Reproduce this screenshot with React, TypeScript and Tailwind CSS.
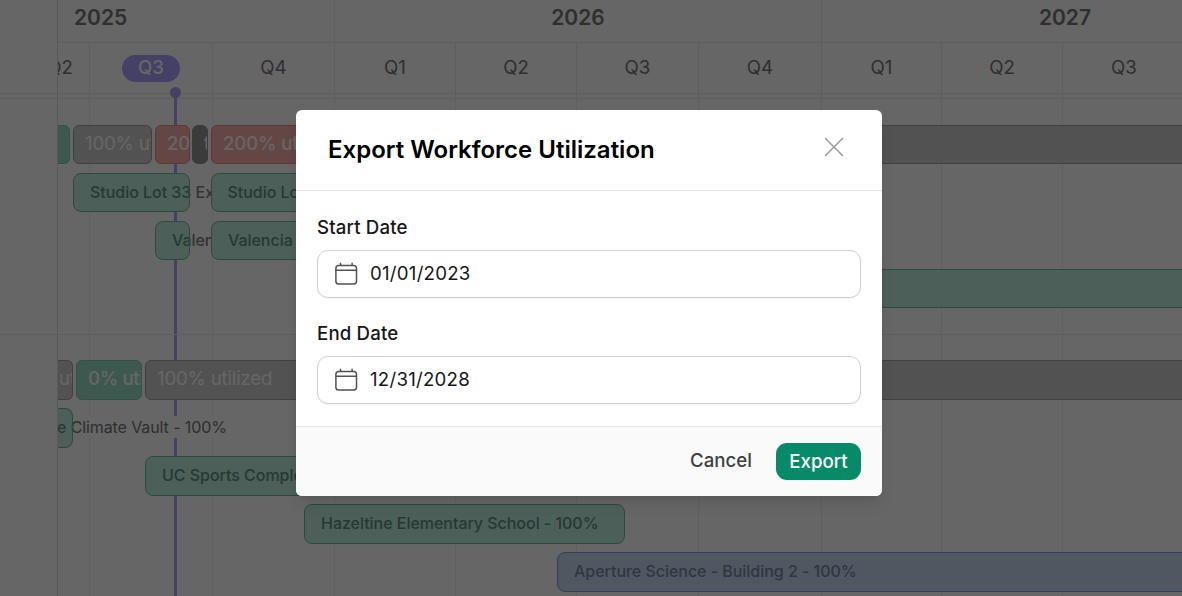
import React from 'react';

interface Quarter {
  label: string;
  width: number;
  current?: boolean;
}

interface BarData {
  // Distance from the end of the previous bar (or from the lane start)
  gap: number;
  width: number;
  tone: string;
  label?: string;
  labelPad?: number;
  openLeft?: boolean;
  labelRoom?: number;
  light?: boolean;
}

interface LaneProps {
  bars: BarData[];
  height: string;
}

const quarters: Quarter[] = [
  { label: 'Q2', width: 32 },
  { label: 'Q3', width: 123, current: true },
  { label: 'Q4', width: 122 },
  { label: 'Q1', width: 121 },
  { label: 'Q2', width: 121 },
  { label: 'Q3', width: 122 },
  { label: 'Q4', width: 123 },
  { label: 'Q1', width: 120 },
  { label: 'Q2', width: 121 },
  { label: 'Q3', width: 123 },
];

const green = 'bg-emerald-500/25 border-[#5fc09e]';
const blue = 'bg-[#6496dc]/35 border-[#7c9ee8]';

const solidGreen = 'bg-[#98dcc4] border-[#7acdb0] font-medium tracking-[-0.02em]';
const solidGray = 'bg-[#cdcdcd] border-[#a0a0a0] font-normal tracking-[-0.01em]';
const solidRed = 'bg-[#fab0ad] border-[#f08a88] font-medium tracking-[-0.01em]';
const solidDark = 'bg-[#959595] border-[#959595] font-medium';

const UtilizationLane: React.FC<LaneProps> = ({ bars, height }) => (
  <div className={`flex ${height}`}>
    {bars.map((bar, i) => (
      <div
        key={i}
        className={`shrink-0 overflow-hidden whitespace-nowrap border text-[18.67px] leading-[36px] text-white ${bar.tone} ${bar.openLeft ? 'rounded-r-md border-l-0' : 'rounded-md'}`}
        style={{ marginLeft: bar.gap, width: bar.width, paddingLeft: bar.labelPad ?? 0 }}
      >
        {bar.label}
      </div>
    ))}
  </div>
);

const AssignmentLane: React.FC<LaneProps> = ({ bars, height }) => (
  <div className={`flex ${height}`}>
    {bars.map((bar, i) => {
      const radius = bar.openLeft ? 'rounded-r-lg' : 'rounded-lg';
      return (
        <div
          key={i}
          className={`relative flex shrink-0 items-center bg-white ${radius}`}
          style={{ marginLeft: bar.gap, width: bar.width }}
        >
          <span
            className={`-mt-0.5 shrink-0 overflow-hidden whitespace-nowrap bg-white text-base leading-[22px] ${bar.light ? 'font-normal tracking-[-0.006em] text-[#757575]' : 'font-medium tracking-[-0.002em] text-[#808080]'}`}
            style={{ marginLeft: bar.labelPad ?? 0, maxWidth: bar.labelRoom }}
          >
            {bar.label}
          </span>
          <div className={`absolute inset-0 border ${radius} ${bar.tone} ${bar.openLeft ? 'border-l-0' : ''}`} />
        </div>
      );
    })}
  </div>
);

const CalendarIcon: React.FC = () => (
  <svg width="24" height="24" viewBox="0 0 24 24" fill="none" stroke="#525252" strokeWidth="1.5" strokeLinecap="round" strokeLinejoin="round">
    <rect x="1.9" y="3.4" width="20.6" height="18.6" rx="2.8" />
    <path d="M1.9 8.2H22.5M6.5 3.2V1.2M18.1 3.2V1.2" />
  </svg>
);

const DateField: React.FC<{ label: string; value: string }> = ({ label, value }) => (
  <div>
    <div className="text-[18.67px] leading-6 font-medium tracking-[0.008em] text-neutral-900">{label}</div>
    <div className="mt-[10px] flex h-12 items-center rounded-[11px] border border-[#d0d0d0] bg-white pl-4 shadow-xs">
      <CalendarIcon />
      <span className="ml-3 text-[18.67px] leading-6 tracking-[0.013em] text-neutral-900">{value}</span>
    </div>
  </div>
);

const Timeline: React.FC = () => (
  <div className="flex h-full bg-white">
    {/* Resource column */}
    <div className="w-[58px] shrink-0 border-r border-[#e0e0e0]">
      <div className="h-[94px] border-b border-[#ececec]" />
      <div className="h-[5px] border-b border-[#ececec]" />
      <div className="h-[236px] border-b border-[#ececec]" />
    </div>

    <div className="relative h-full flex-1 overflow-hidden">
      {/* Years */}
      <div className="flex h-[43px] border-b border-[#ececec] text-[21px] leading-[35px] font-semibold text-[#757575]">
        <div className="w-[277px] shrink-0 border-r border-[#f0f0f0] pl-4">2025</div>
        <div className="w-[487px] shrink-0 border-r border-[#f0f0f0] text-center">2026</div>
        <div className="w-[486px] shrink-0 text-center">2027</div>
      </div>

      {/* Quarters */}
      <div className="flex h-[51px] border-b border-[#ececec] text-[18.67px] text-[#757575]">
        {quarters.map((q, i) => (
          <div
            key={i}
            className={`flex shrink-0 items-center overflow-hidden border-r border-[#ececec] ${i === 0 ? 'justify-end pr-4' : 'justify-center'}`}
            style={{ width: q.width }}
          >
            {q.current ? (
              <span className="h-[27px] w-[58px] rounded-full bg-[#aaa2fc] text-center leading-[25px] font-medium text-white">
                {q.label}
              </span>
            ) : (
              <span>{q.label}</span>
            )}
          </div>
        ))}
      </div>
      <div className="h-[5px] border-b border-[#ececec]" />

      {/* Grid lines and today marker */}
      <div className="absolute inset-x-0 top-[94px] bottom-0 flex">
        {quarters.map((q, i) => (
          <div key={i} className="shrink-0 border-r border-[#f0f0f0]" style={{ width: q.width }} />
        ))}
      </div>
      <div className="absolute top-[92px] bottom-0 left-[116px] w-[3px] bg-[#aaa2fc]" />
      <div className="absolute top-[87px] left-[112px] size-[11px] rounded-full bg-[#aaa2fc]" />

      {/* First person */}
      <div className="relative flex h-[236px] flex-col gap-[9px] border-b border-[#ececec] pt-[26px]">
        <UtilizationLane
          height="h-[39px]"
          bars={[
            { gap: 0, width: 12, tone: solidGreen, openLeft: true },
            { gap: 3, width: 79, tone: solidGray, label: '100% utilized', labelPad: 11 },
            { gap: 3, width: 35, tone: solidRed, label: '200% utilized', labelPad: 11 },
            { gap: 2, width: 16, tone: solidDark, label: 't', labelPad: 11 },
            { gap: 3, width: 462, tone: solidRed, label: '200% utilized', labelPad: 11 },
            { gap: 3, width: 600, tone: solidGray },
          ]}
        />
        <AssignmentLane
          height="h-[39px]"
          bars={[
            { gap: 15, width: 116.5, tone: green, label: 'Studio Lot 33 Expansion - 100%', labelRoom: 121, labelPad: 17 },
            { gap: 21, width: 462, tone: green, label: 'Studio Lot 33 Expansion - 100%', labelPad: 17 },
          ]}
        />
        <AssignmentLane
          height="h-[39px]"
          bars={[
            { gap: 97, width: 34.5, tone: green, label: 'Valencia Studios - 100%', labelRoom: 39, labelPad: 17 },
            { gap: 21, width: 462, tone: green, label: 'Valencia Studios - 100%', labelPad: 17.5 },
          ]}
        />
        <AssignmentLane height="h-[39px]" bars={[{ gap: 617, width: 600, tone: green }]} />
      </div>

      {/* Second person */}
      <div className="relative flex flex-col gap-2 pt-[25px]">
        <UtilizationLane
          height="h-10"
          bars={[
            { gap: 0, width: 15, tone: solidGray, openLeft: true, label: 'utilized', labelPad: 1 },
            { gap: 3, width: 66, tone: solidGreen, label: '0% utilized', labelPad: 11 },
            { gap: 3, width: 1200, tone: solidGray, label: '100% utilized', labelPad: 11 },
          ]}
        />
        <AssignmentLane
          height="h-10"
          bars={[{ gap: 0, width: 15, tone: green, openLeft: true, label: 'e Climate Vault - 100%', labelPad: -1, light: true }]}
        />
        <AssignmentLane height="h-10" bars={[{ gap: 87, width: 523, tone: green, label: 'UC Sports Complex - 100%', labelPad: 17 }]} />
        <AssignmentLane
          height="h-10"
          bars={[{ gap: 246, width: 321.4, tone: green, label: 'Hazeltine Elementary School - 100%', labelPad: 17 }]}
        />
        <AssignmentLane
          height="h-10"
          bars={[{ gap: 499, width: 700, tone: blue, label: 'Aperture Science - Building 2 - 100%', labelPad: 17 }]}
        />
      </div>
    </div>
  </div>
);

const ExportDialog: React.FC = () => (
  <div className="flex h-[386px] w-[586px] flex-col overflow-hidden rounded-md bg-white shadow-lg">
    {/* Header */}
    <div className="flex h-[81px] items-center justify-between border-b border-neutral-200 pr-[38px] pl-8">
      <h2 className="text-2xl font-semibold text-black">Export Workforce Utilization</h2>
      <button aria-label="Close" className="-mt-1.5">
        <svg width="20" height="20" viewBox="0 0 20 20" fill="none" stroke="#9a9a9a" strokeWidth="1.5" strokeLinecap="round">
          <path d="M1.5 1.5L18.5 18.5M18.5 1.5L1.5 18.5" />
        </svg>
      </button>
    </div>

    {/* Fields */}
    <div className="flex flex-1 flex-col gap-6 px-[21px] pt-[25px]">
      <DateField label="Start Date" value="01/01/2023" />
      <DateField label="End Date" value="12/31/2028" />
    </div>

    {/* Footer */}
    <div className="flex h-[70px] items-center justify-end gap-6 border-t border-neutral-200 bg-[#fafafa] pr-[21px]">
      <button className="-mt-0.5 text-[18.67px] font-medium text-neutral-700">Cancel</button>
      <button className="h-[37px] w-[85px] rounded-[11px] bg-[#078a68] text-[18.67px] leading-[34px] font-medium text-white">Export</button>
    </div>
  </div>
);

export default function App() {
  return (
    <div className="relative h-[596px] w-[1182px] overflow-hidden font-['Inter',sans-serif]">
      <Timeline />
      <div className="absolute inset-0 flex items-start justify-center bg-black/60 pt-[110px] pr-1">
        <ExportDialog />
      </div>
    </div>
  );
}
